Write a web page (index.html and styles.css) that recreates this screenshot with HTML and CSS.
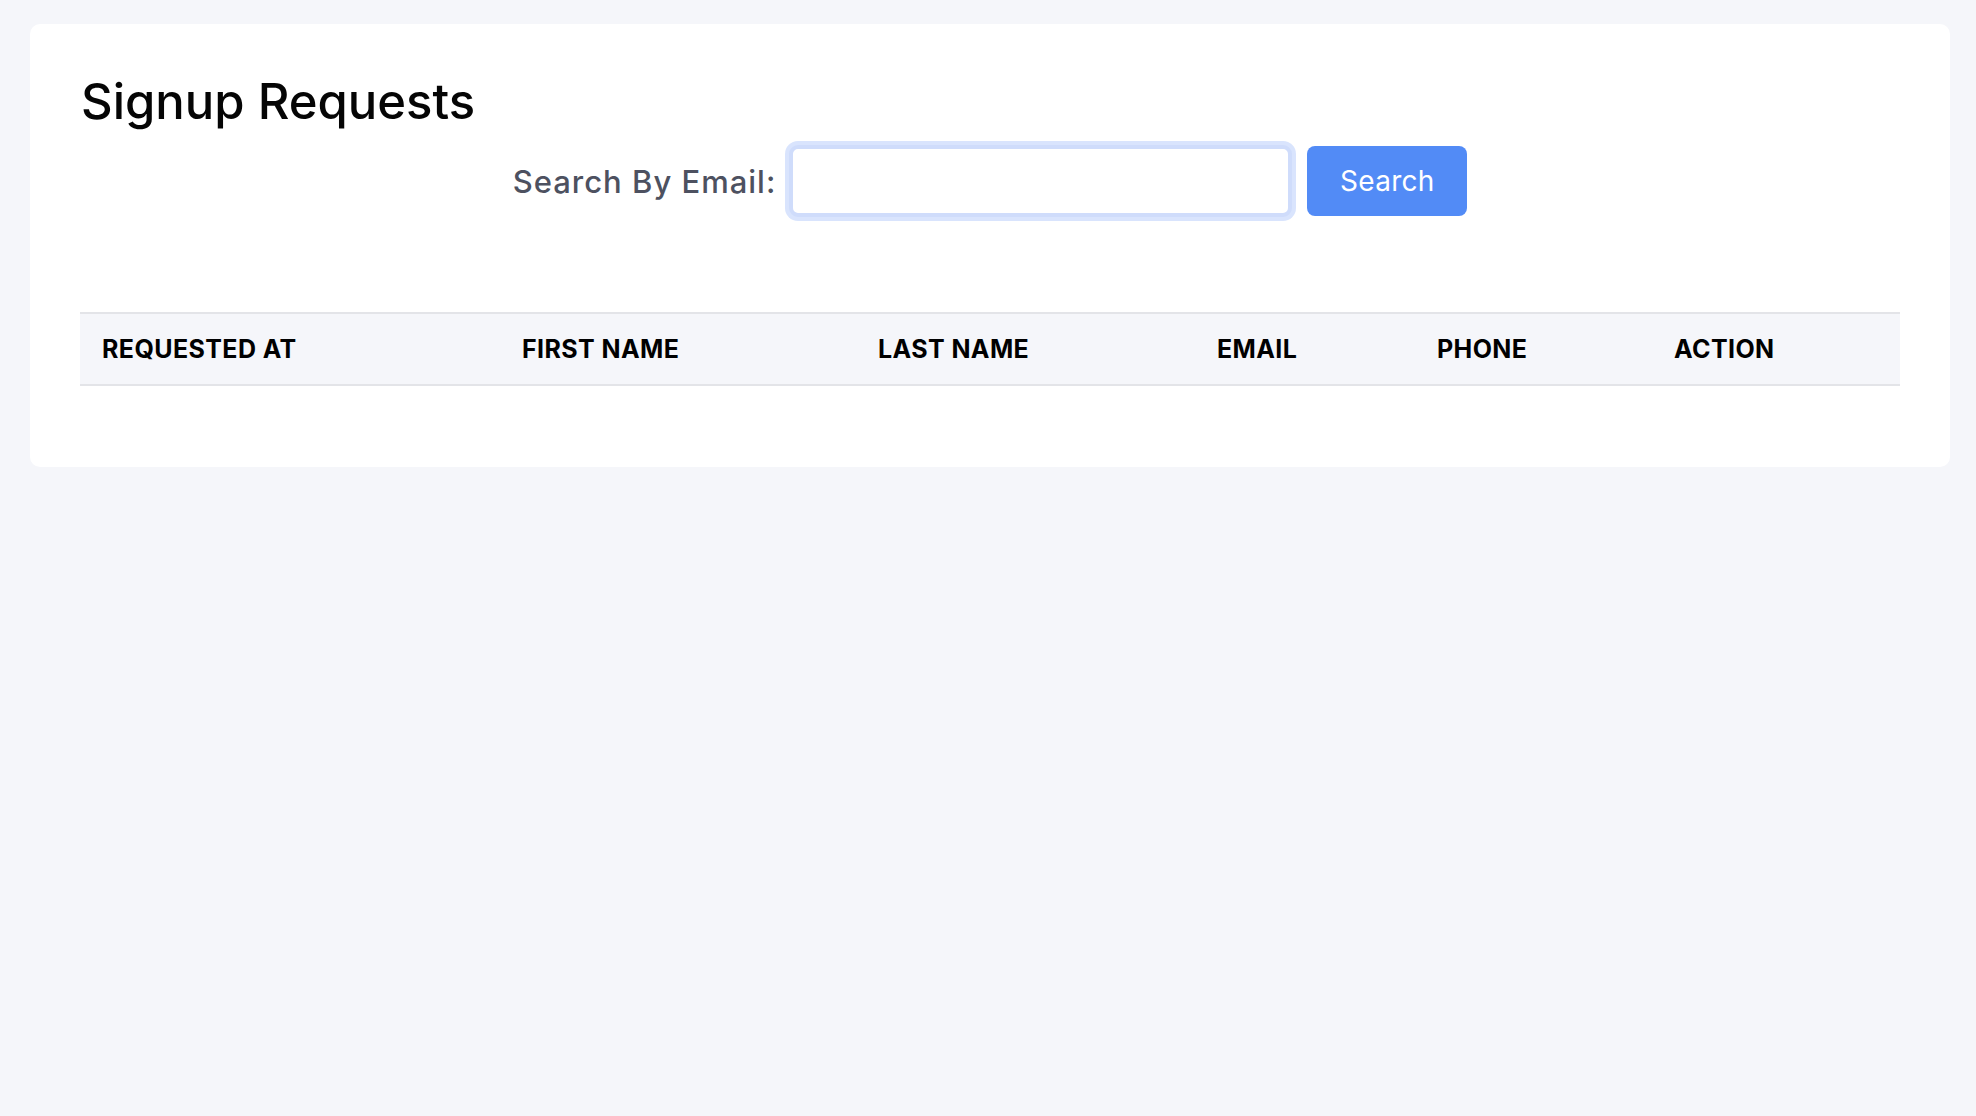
FILE: index.html
```html
<!DOCTYPE html>
<html lang="en">
<head>
<meta charset="utf-8">
<title>Signup Requests</title>
<link rel="stylesheet" href="styles.css">
</head>
<body>
<main class="card">
  <h1 class="title">Signup Requests</h1>
  <form class="search" onsubmit="return false">
    <label class="search-label" for="email">Search By Email:</label>
    <input class="search-input" id="email" type="text">
    <button class="search-btn" type="submit">Search</button>
  </form>
  <table class="requests">
    <colgroup>
      <col class="c1"><col class="c2"><col class="c3"><col class="c4"><col class="c5"><col class="c6">
    </colgroup>
    <thead>
      <tr>
        <th>REQUESTED AT</th>
        <th>FIRST NAME</th>
        <th>LAST NAME</th>
        <th>EMAIL</th>
        <th>PHONE</th>
        <th>ACTION</th>
      </tr>
    </thead>
    <tbody></tbody>
  </table>
</main>
</body>
</html>
```
FILE: styles.css
```css
* { box-sizing: border-box; }
html, body {
  margin: 0;
  background: #f5f6fa;
  font-family: Inter, "Open Sans", sans-serif;
}
.card {
  margin: 24px 26px 0 30px;
  background: #ffffff;
  border-radius: 10px;
  padding: 48px 50px 81px 50px;
}
.title {
  margin: 0;
  font-size: 49px;
  line-height: 60px;
  font-weight: 500;
  color: #050505;
  padding-left: 1px;
}
.search {
  display: flex;
  justify-content: center;
  align-items: center;
  margin-top: 13px;
}
.search-label {
  font-size: 31px;
  font-weight: 500;
  letter-spacing: 1px;
  color: #4d5160;
  margin-right: 13px;
}
.search-input {
  width: 503px;
  height: 72px;
  border: 4px solid #cfdcfb;
  box-shadow: 0 0 0 4px #d9e4fd;
  border-radius: 9px;
  background: #fff;
  outline: none;
  font-family: inherit;
  font-size: 26px;
}
.search-btn {
  width: 160px;
  height: 70px;
  margin-left: 15px;
  border: 0;
  border-radius: 8px;
  background: #528bf6;
  color: #fff;
  font-family: inherit;
  font-size: 28px;
  letter-spacing: 0.3px;
  font-weight: 400;
  cursor: pointer;
}
.requests {
  width: 100%;
  margin-top: 95px;
  border-collapse: collapse;
  table-layout: fixed;
}
.c1 { width: 420px; }
.c2 { width: 356px; }
.c3 { width: 339px; }
.c4 { width: 220px; }
.c5 { width: 237px; }
.c6 { width: auto; }
.requests thead tr {
  background: #f5f6fa;
  border-top: 2px solid #e3e4e8;
  border-bottom: 2px solid #e3e4e8;
}
.requests th {
  text-align: left;
  padding: 0 0 0 22px;
  height: 72px;
  font-size: 25px;
  font-weight: 700;
  color: #000;
  letter-spacing: 0.4px;
}
```
